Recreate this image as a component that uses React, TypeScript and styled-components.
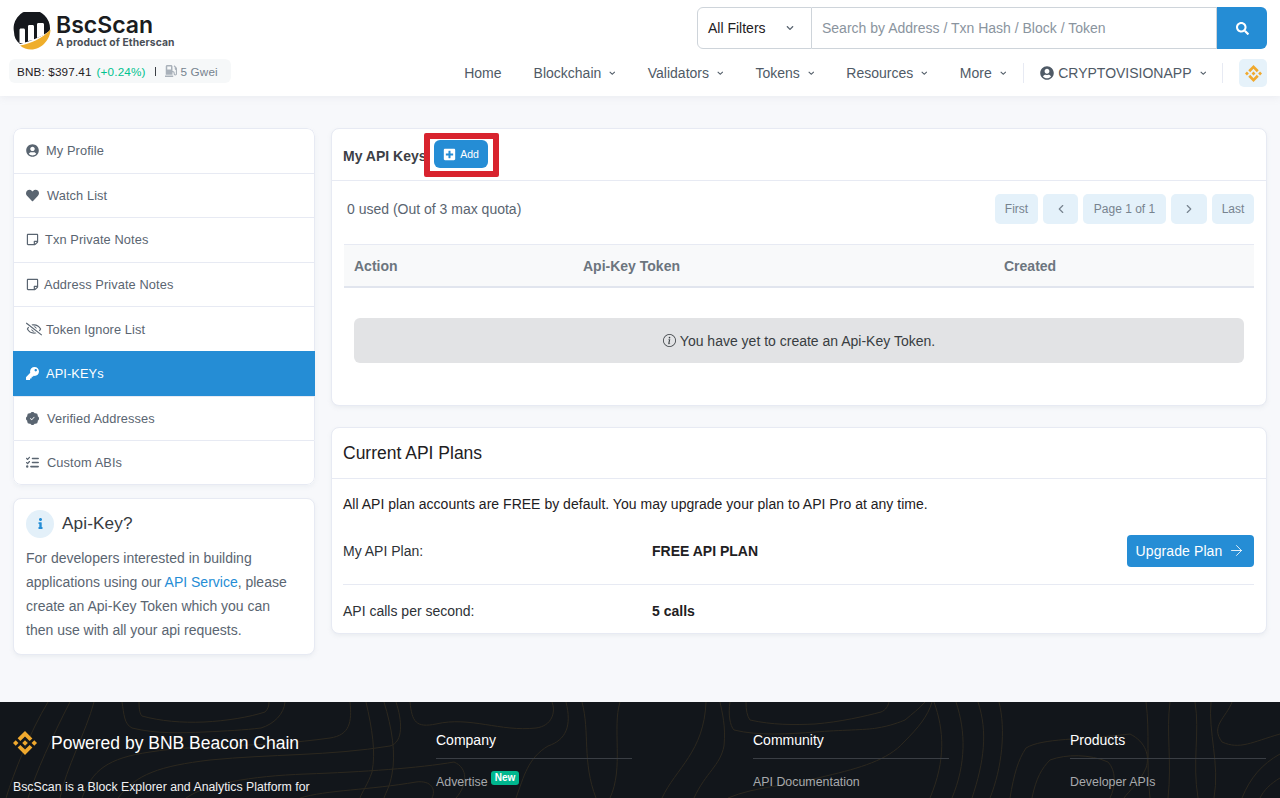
import React from "react";
import styled, { createGlobalStyle } from "styled-components";
import {
  FaUserCircle, FaHeart, FaRegStickyNote, FaRegEyeSlash, FaKey, FaInfo, FaSearch,
  FaPlusSquare, FaChevronDown, FaGasPump,
} from "react-icons/fa";
import { BsPatchCheckFill, BsInfoCircle } from "react-icons/bs";
import { FaListCheck } from "react-icons/fa6";
import { ArrowRight, ChevronLeft, ChevronRight } from "lucide-react";

const Global = createGlobalStyle`
  html, body { margin: 0; padding: 0; height: 798px; overflow: hidden; }
  body { background: #f7f8fb; font-family: "Liberation Sans", Arial, sans-serif; color: #1e2022; }
  * { box-sizing: border-box; }
  a { text-decoration: none; color: inherit; }
`;

const Page = styled.div`height: 798px; overflow: hidden; display: flex; flex-direction: column;`;

const Header = styled.header`
  height: 96px; flex: none; background: #fff; padding: 7px 13px 0 9px;
  display: flex; justify-content: space-between;
  box-shadow: 0 1px 8px rgba(151,164,175,.15);
  position: relative; z-index: 1;
`;
const Brand = styled.div`display: flex; flex-direction: column; align-items: flex-start;`;
const LogoRow = styled.div`display: flex; gap: 5px; margin: 5px 0 0 4px; height: 40px;`;
const LogoText = styled.div`display: flex; flex-direction: column; margin-top: 1px;`;
const LogoName = styled.span`font: 600 23px/24px Inter, sans-serif; color: #1a1c20; letter-spacing: 0;`;
const LogoSub = styled.span`font: 700 10.3px/11px Inter, sans-serif; color: #4a4f57; letter-spacing: .12px;`;
const PricePill = styled.div`
  margin-top: 7px; height: 24px; width: 222px; padding: 0 8px; border-radius: 6px; background: #f6f8f9;
  display: flex; align-items: center; font-size: 11.7px; color: #1e2022; white-space: nowrap; letter-spacing: .15px;
`;
const Up = styled.span`color: #00c28f; margin-left: 5px;`;
const Bar = styled.span`width: 1px; height: 9px; background: #3c4046; margin: 0 9px;`;
const Gas = styled.span`display: flex; align-items: center; gap: 4px; color: #77838f; font-size: 11.7px;
  svg { color: #a9b1ba; font-size: 12px; }`;

const Right = styled.div`display: flex; flex-direction: column; align-items: flex-end;`;
const Search = styled.form`display: flex; width: 570px; height: 42px; margin: 0;`;
const FilterBox = styled.div`
  width: 115px; border: 1px solid #ced4da; border-right: 1px solid #ced4da; border-radius: 6px 0 0 6px;
  display: flex; align-items: center; justify-content: space-between; padding: 0 17px 0 10px;
  font-size: 14px; color: #1e2022;
  svg { font-size: 8px; color: #5a6571; }
`;
const SearchField = styled.div`
  flex: 1; border: 1px solid #ced4da; border-left: 0; display: flex; align-items: center; padding: 0 10px;
  font-size: 14px; color: #8a949e;
`;
const SearchBtn = styled.button`
  width: 50px; border: 0; background: #258dd5; color: #fff; border-radius: 0 6px 6px 0; font-size: 13px;
  display: flex; align-items: center; justify-content: center;
`;
const Nav = styled.nav`display: flex; align-items: center; height: 28px; margin-top: 10px;`;
const NavItem = styled.a<{ $gap?: number }>`
  display: flex; align-items: center; font-size: 14px; color: #4f5a66; margin-right: ${(p) => p.$gap ?? 32}px; white-space: nowrap;
  svg.caret { font-size: 6.5px; margin-left: 8px; }
`;
const UserIcon = styled.span`display: flex; font-size: 14px; margin-right: 4px;`;
const NavDivider = styled.span`width: 1px; height: 20px; background: #e7eaf3; margin-right: 16px;`;
const BnbBtn = styled.a`
  width: 28px; height: 28px; border-radius: 5px; background: #e6f2fa; display: flex; align-items: center; justify-content: center;
`;

const Main = styled.main`
  flex: none; height: 606px; display: grid; grid-template-columns: 302px 936px; column-gap: 16px;
  padding: 32px 13px 0; align-items: start;
`;
const Side = styled.aside`display: flex; flex-direction: column; gap: 13px;`;
const Menu = styled.div`
  background: #fff; border-radius: 8px; overflow: hidden;
  box-shadow: 0 2px 4px rgba(151,164,175,.1);
`;
const MenuRow = styled.a<{ $active?: boolean; $gap?: number; $icon?: number }>`
  height: 44.6px; display: flex; align-items: center; padding-left: 12px; gap: ${(p) => p.$gap ?? 8}px;
  font-size: 12.8px; letter-spacing: .1px;
  color: ${(p) => (p.$active ? "#fff" : "#5a6571")};
  background: ${(p) => (p.$active ? "#258dd5" : "#fff")};
  border: 1px solid ${(p) => (p.$active ? "#258dd5" : "#e7eaf3")};
  border-bottom: 0;
  &:last-child { border-bottom: 1px solid #e7eaf3; border-radius: 0 0 8px 8px; }
  &:first-child { border-radius: 8px 8px 0 0; }
  svg { font-size: ${(p) => p.$icon ?? 13}px; flex: none; }
`;
const Card = styled.section`
  background: #fff; border: 1px solid #e7eaf3; border-radius: 8px; box-shadow: 0 2px 4px rgba(151,164,175,.12);
`;
const HelpCard = styled(Card)`height: 157px; padding: 11px 12px 0;`;
const HelpHead = styled.div`display: flex; align-items: center; gap: 8px; height: 28px;`;
const HelpBadge = styled.span`
  width: 28px; height: 28px; border-radius: 50%; background: #e3f0f9; color: #258dd5; font-size: 11px;
  display: flex; align-items: center; justify-content: center;
`;
const HelpTitle = styled.span`font-size: 17.2px; color: #363a3f; letter-spacing: .1px; margin-top: -1px;`;
const HelpText = styled.p`margin: 8px 0 0; padding-right: 10px; font-size: 14px; line-height: 24px; color: #5a6571;`;
const Link = styled.a`color: #258dd5;`;

const Content = styled.div`display: flex; flex-direction: column; gap: 21px;`;
const KeysCard = styled(Card)`height: 278px;`;
const KeysHead = styled.div`
  height: 52px; display: flex; align-items: center; padding: 0 12px 0 11px; border-bottom: 1px solid #e7eaf3;
`;
const KeysTitle = styled.h2`margin: 2px 0 0; flex: none; font-size: 14px; font-weight: 700; color: #3c4046; white-space: nowrap;`;
const Highlight = styled.span`
  display: flex; align-items: center; justify-content: center; flex: none; width: 75px; height: 44px;
  margin: 0 0 0 -3px; border: 6px solid #d8232e; border-radius: 2px; background: #fff;
  position: relative;
`;
const AddBtn = styled.a`
  height: 28px; width: 54px; border-radius: 6px; background: #258dd5; color: #fff; font-size: 10.5px;
  display: flex; align-items: center; justify-content: center; gap: 4px; margin-top: -1px;
  svg { font-size: 13px; }
`;
const KeysBody = styled.div`padding: 0 12px 0 12px;`;
const Toolbar = styled.div`height: 63px; display: flex; align-items: center; justify-content: space-between; padding: 0 0 7px 3px;`;
const Used = styled.span`font-size: 14px; color: #5a6571;`;
const Pager = styled.div`display: flex; gap: 5px;`;
const PageBtn = styled.a<{ $w: number }>`
  width: ${(p) => p.$w}px; height: 30px; border-radius: 5px; background: #e4f1fa; color: #77838f; font-size: 12px;
  display: flex; align-items: center; justify-content: center;
`;
const Table = styled.div`
  height: 44px; display: grid; grid-template-columns: 229px 421px 1fr; align-items: center; padding: 0 10px;
  background: #f8f9fa; border-top: 1px solid #e7eaf3; border-bottom: 2px solid #e1e5ee;
  font-size: 14px; font-weight: 700; color: #6c757e;
`;
const Empty = styled.div`
  height: 45px; margin: 30px 10px 0; border-radius: 6px; background: #e2e3e5; color: #383d41;
  display: flex; align-items: center; justify-content: center; gap: 4px; font-size: 14px;
  svg { font-size: 13px; }
`;
const PlansCard = styled(Card)`height: 207px;`;
const PlansHead = styled.h3`
  margin: 0; height: 51px; display: flex; align-items: center; padding: 0 11px; border-bottom: 1px solid #e7eaf3;
  font-size: 17.5px; font-weight: 400; color: #1e2022;
`;
const PlansBody = styled.div`padding: 0 12px 0 11px;`;
const PlansIntro = styled.p`margin: 0; height: 49px; display: flex; align-items: center; font-size: 14px; color: #1e2022; letter-spacing: .02px;`;
const PlanRow = styled.div<{ $h: number; $line?: boolean; $pb?: number; $pt?: number }>`
  height: ${(p) => p.$h}px; display: grid; grid-template-columns: 309px 1fr auto; align-items: center;
  padding: ${(p) => p.$pt ?? 0}px 0 ${(p) => p.$pb ?? 0}px;
  font-size: 14px; color: #2d3136;
  border-bottom: ${(p) => (p.$line ? "1px solid #e7eaf3" : "0")};
`;
const Strong = styled.strong`color: #1e2022;`;
const Upgrade = styled.a`
  width: 127px; height: 32px; border-radius: 4px; background: #258dd5; color: #fff; font-size: 14px;
  display: flex; align-items: center; justify-content: center; gap: 6px; letter-spacing: .1px;
`;

const Footer = styled.footer`
  flex: 1; background: #12161b; position: relative; overflow: hidden; color: #fff;
  display: grid; grid-template-columns: 423px 317px 317px 1fr; padding: 0 13px;
`;
const Topo = styled.svg`position: absolute; inset: 0; width: 100%; height: 100%; pointer-events: none;`;
const FootCol = styled.div`position: relative; padding-top: 28px;`;
const Power = styled.div`display: flex; align-items: center; gap: 14px; font-size: 17.5px; color: #fff; height: 26px;`;
const Blurb = styled.p`margin: 24px 0 0; font-size: 12.3px; color: #f0f1f3; white-space: nowrap;`;
const FootHead = styled.div`
  font-size: 14px; color: #fff; width: 196px; height: 28px; padding-top: 1px; margin-top: 1px; border-bottom: 1px solid #3a3e44;
`;
const FootLink = styled.div`display: flex; align-items: flex-start; gap: 3px; margin-top: 15px; font-size: 12.4px; color: #a7a9ac; line-height: 16px;`;
const NewTag = styled.span`
  background: #00b78e; color: #fff; font-size: 10px; font-weight: 700; height: 14px; line-height: 13px; padding: 0 4px; border-radius: 3px; margin-top: -3px;
`;

const BnbMark = ({ size }: { size: number }) => (
  <svg width={size} height={size} viewBox="0 0 126.61 126.61" fill="#f0a92e">
    <path d="M38.73 53.2l24.59-24.58 24.6 24.6 14.3-14.31L63.32 0 24.43 38.9z" />
    <path d="M0 63.31l14.3-14.31 14.31 14.31-14.31 14.3z" />
    <path d="M38.73 73.41l24.59 24.59 24.6-24.6 14.31 14.29L63.32 126.61 24.41 87.7z" />
    <path d="M98 63.31l14.3-14.31 14.31 14.3-14.31 14.32z" />
    <path d="M77.83 63.3L63.32 48.78 48.81 63.28l14.51 14.52z" />
  </svg>
);

const BscLogo = () => (
  <svg width="38" height="38" viewBox="0 0 38 38">
    <path d="M1 20 A18.2 18.2 0 1 1 37 17 L36.5 19 C30 24 18 29 7 32 C3 29 1 25 1 20z" fill="#15181d" />
    <path d="M6.500 31V18c0-1 .6-1.500 1.400-1.500h2.700c.8 0 1.400.6 1.400 1.500V31zM15 29V14.500c0-1 .6-1.500 1.400-1.500h3.200c.8 0 1.400.6 1.400 1.500V28zM24 26V12.500c0-1 .6-1.500 1.400-1.500h4.200c.8 0 1.400.6 1.400 1.500V23z" fill="#fff" />
    <path d="M7 33.500C17 32 30 26 37.500 17.500 C37.500 27 29 37.500 18 37.500 C14 37.500 10 36 7 33.500z" fill="#efae2b" />
  </svg>
);

const menu: [React.ReactNode, string, number?, number?][] = [
  [<FaUserCircle />, "My Profile", 7],
  [<FaHeart />, "Watch List"],
  [<FaRegStickyNote />, "Txn Private Notes", 6],
  [<FaRegStickyNote />, "Address Private Notes", 5],
  [<FaRegEyeSlash />, "Token Ignore List", 4, 16],
];
const menu2: [React.ReactNode, string][] = [
  [<BsPatchCheckFill />, "Verified Addresses"],
  [<FaListCheck />, "Custom ABIs"],
];

const navItems: [string, number][] = [["Blockchain", 32], ["Validators", 32], ["Tokens", 32], ["Resources", 32], ["More", 17]];

const topo = [
  "M6 96C14 70 30 30 48 0", "M28 96C36 70 52 35 70 0", "M60 96C66 66 86 30 94 0",
  "M122 0C124 12 124 22 132 26C156 32 182 31 204 30C226 29 245 28 261 26C274 22 284 12 285 0",
  "M139 0C139 8 140 12 142 14C160 19 182 21 204 20C226 19 250 15 265 10C268 7 269 4 269 0",
  "M82 96C92 68 108 56 150 50C200 42 260 46 330 36C350 33 352 20 350 0",
  "M118 96C136 72 160 64 210 58C270 52 330 54 390 44C404 40 402 18 396 0",
  "M186 96C206 82 250 74 306 72C362 70 420 66 454 60C468 66 468 82 456 96",
  "M300 96C326 88 370 88 416 80C432 78 436 88 432 96",
  "M366 0C372 26 376 50 372 70C368 82 362 90 360 96",
  "M384 0C392 26 396 52 392 72C390 84 386 90 384 96",
  "M410 0C412 20 416 26 436 22C470 14 500 30 536 26C552 24 556 10 552 0",
  "M516 96C524 74 528 56 548 44C566 38 572 24 566 0",
  "M582 0C590 30 582 60 596 96", "M620 0C612 26 624 66 610 96",
  "M662 96C676 66 704 50 706 0", "M694 96C706 70 720 64 724 44C726 24 722 10 720 0",
  "M730 0C728 12 730 24 734 28C758 34 790 32 815 30C840 28 866 28 877 26C890 24 900 20 905 18C912 12 920 6 925 0",
  "M746 0C746 8 747 14 750 18C772 23 794 23 815 22C840 20 866 14 881 10C886 8 888 4 889 0",
  "M728 96C756 84 790 84 826 74C860 66 888 58 904 40C918 26 928 14 932 0",
  "M934 0C944 28 946 58 930 96", "M956 0C966 30 966 62 952 96", "M978 0C988 30 984 60 972 96", "M999 0C1006 28 1002 66 990 96",
  "M1010 96C1014 72 1018 58 1026 46C1042 36 1080 38 1130 32C1146 40 1150 54 1146 66C1140 80 1128 90 1124 96",
  "M1032 96C1036 76 1042 66 1050 58C1066 52 1090 52 1108 60C1116 68 1116 84 1110 96",
  "M1146 0C1150 30 1146 62 1150 96", "M1170 0C1166 30 1172 60 1168 96", "M1195 0C1200 30 1192 60 1198 96",
  "M1211 0C1208 30 1220 62 1214 96", "M1232 0C1226 16 1210 24 1222 40C1240 48 1252 40 1280 32",
  "M1280 52C1262 62 1250 76 1242 96", "M1280 76C1270 82 1264 88 1260 96",
];

export default function App() {
  return (
    <Page>
      <Global />
      <Header>
        <Brand>
          <LogoRow>
            <BscLogo />
            <LogoText>
              <LogoName>BscScan</LogoName>
              <LogoSub>A product of Etherscan</LogoSub>
            </LogoText>
          </LogoRow>
          <PricePill>
            BNB: $397.41<Up>(+0.24%)</Up><Bar />
            <Gas><FaGasPump />5 Gwei</Gas>
          </PricePill>
        </Brand>
        <Right>
          <Search>
            <FilterBox>All Filters<FaChevronDown /></FilterBox>
            <SearchField>Search by Address / Txn Hash / Block / Token</SearchField>
            <SearchBtn type="button"><FaSearch /></SearchBtn>
          </Search>
          <Nav>
            <NavItem>Home</NavItem>
            {navItems.map(([t, g]) => (
              <NavItem key={t} $gap={g}>{t}<FaChevronDown className="caret" /></NavItem>
            ))}
            <NavDivider />
            <NavItem $gap={16}><UserIcon><FaUserCircle /></UserIcon>CRYPTOVISIONAPP<FaChevronDown className="caret" /></NavItem>
            <NavDivider />
            <BnbBtn><BnbMark size={17} /></BnbBtn>
          </Nav>
        </Right>
      </Header>
      <Main>
        <Side>
          <Menu>
            {menu.map(([icon, label, gap, size]) => (
              <MenuRow key={label} $gap={gap} $icon={size}>{icon}{label}</MenuRow>
            ))}
            <MenuRow $active $gap={7}><FaKey />API-KEYs</MenuRow>
            {menu2.map(([icon, label]) => (
              <MenuRow key={label}>{icon}{label}</MenuRow>
            ))}
          </Menu>
          <HelpCard>
            <HelpHead>
              <HelpBadge><FaInfo /></HelpBadge>
              <HelpTitle>Api-Key?</HelpTitle>
            </HelpHead>
            <HelpText>
              For developers interested in building applications using our <Link>API Service</Link>, please create an Api-Key Token which you can then use with all your api requests.
            </HelpText>
          </HelpCard>
        </Side>
        <Content>
          <KeysCard>
            <KeysHead>
              <KeysTitle>My API Keys</KeysTitle>
              <Highlight>
                <AddBtn><FaPlusSquare />Add</AddBtn>
              </Highlight>
            </KeysHead>
            <KeysBody>
              <Toolbar>
                <Used>0 used (Out of 3 max quota)</Used>
                <Pager>
                  <PageBtn $w={43}>First</PageBtn>
                  <PageBtn $w={35}><ChevronLeft size={14} /></PageBtn>
                  <PageBtn $w={83}>Page 1 of 1</PageBtn>
                  <PageBtn $w={36}><ChevronRight size={14} /></PageBtn>
                  <PageBtn $w={42}>Last</PageBtn>
                </Pager>
              </Toolbar>
              <Table>
                <span>Action</span>
                <span>Api-Key Token</span>
                <span>Created</span>
              </Table>
              <Empty><BsInfoCircle />You have yet to create an Api-Key Token.</Empty>
            </KeysBody>
          </KeysCard>
          <PlansCard>
            <PlansHead>Current API Plans</PlansHead>
            <PlansBody>
              <PlansIntro>All API plan accounts are FREE by default. You may upgrade your plan to API Pro at any time.</PlansIntro>
              <PlanRow $h={57} $pb={11} $line>
                <span>My API Plan:</span>
                <Strong>FREE API PLAN</Strong>
                <Upgrade>Upgrade Plan<ArrowRight size={17} strokeWidth={1.2} /></Upgrade>
              </PlanRow>
              <PlanRow $h={49} $pt={2}>
                <span>API calls per second:</span>
                <Strong>5 calls</Strong>
              </PlanRow>
            </PlansBody>
          </PlansCard>
        </Content>
      </Main>
      <Footer>
        <Topo viewBox="0 0 1280 96" preserveAspectRatio="none" fill="none" stroke="#2c281f" strokeWidth="1">
          {topo.map((d) => <path key={d} d={d} />)}
        </Topo>
        <FootCol>
          <Power><BnbMark size={24} />Powered by BNB Beacon Chain</Power>
          <Blurb>BscScan is a Block Explorer and Analytics Platform for</Blurb>
        </FootCol>
        <FootCol>
          <FootHead>Company</FootHead>
          <FootLink>Advertise <NewTag>New</NewTag></FootLink>
        </FootCol>
        <FootCol>
          <FootHead>Community</FootHead>
          <FootLink>API Documentation</FootLink>
        </FootCol>
        <FootCol>
          <FootHead>Products</FootHead>
          <FootLink>Developer APIs</FootLink>
        </FootCol>
      </Footer>
    </Page>
  );
}
